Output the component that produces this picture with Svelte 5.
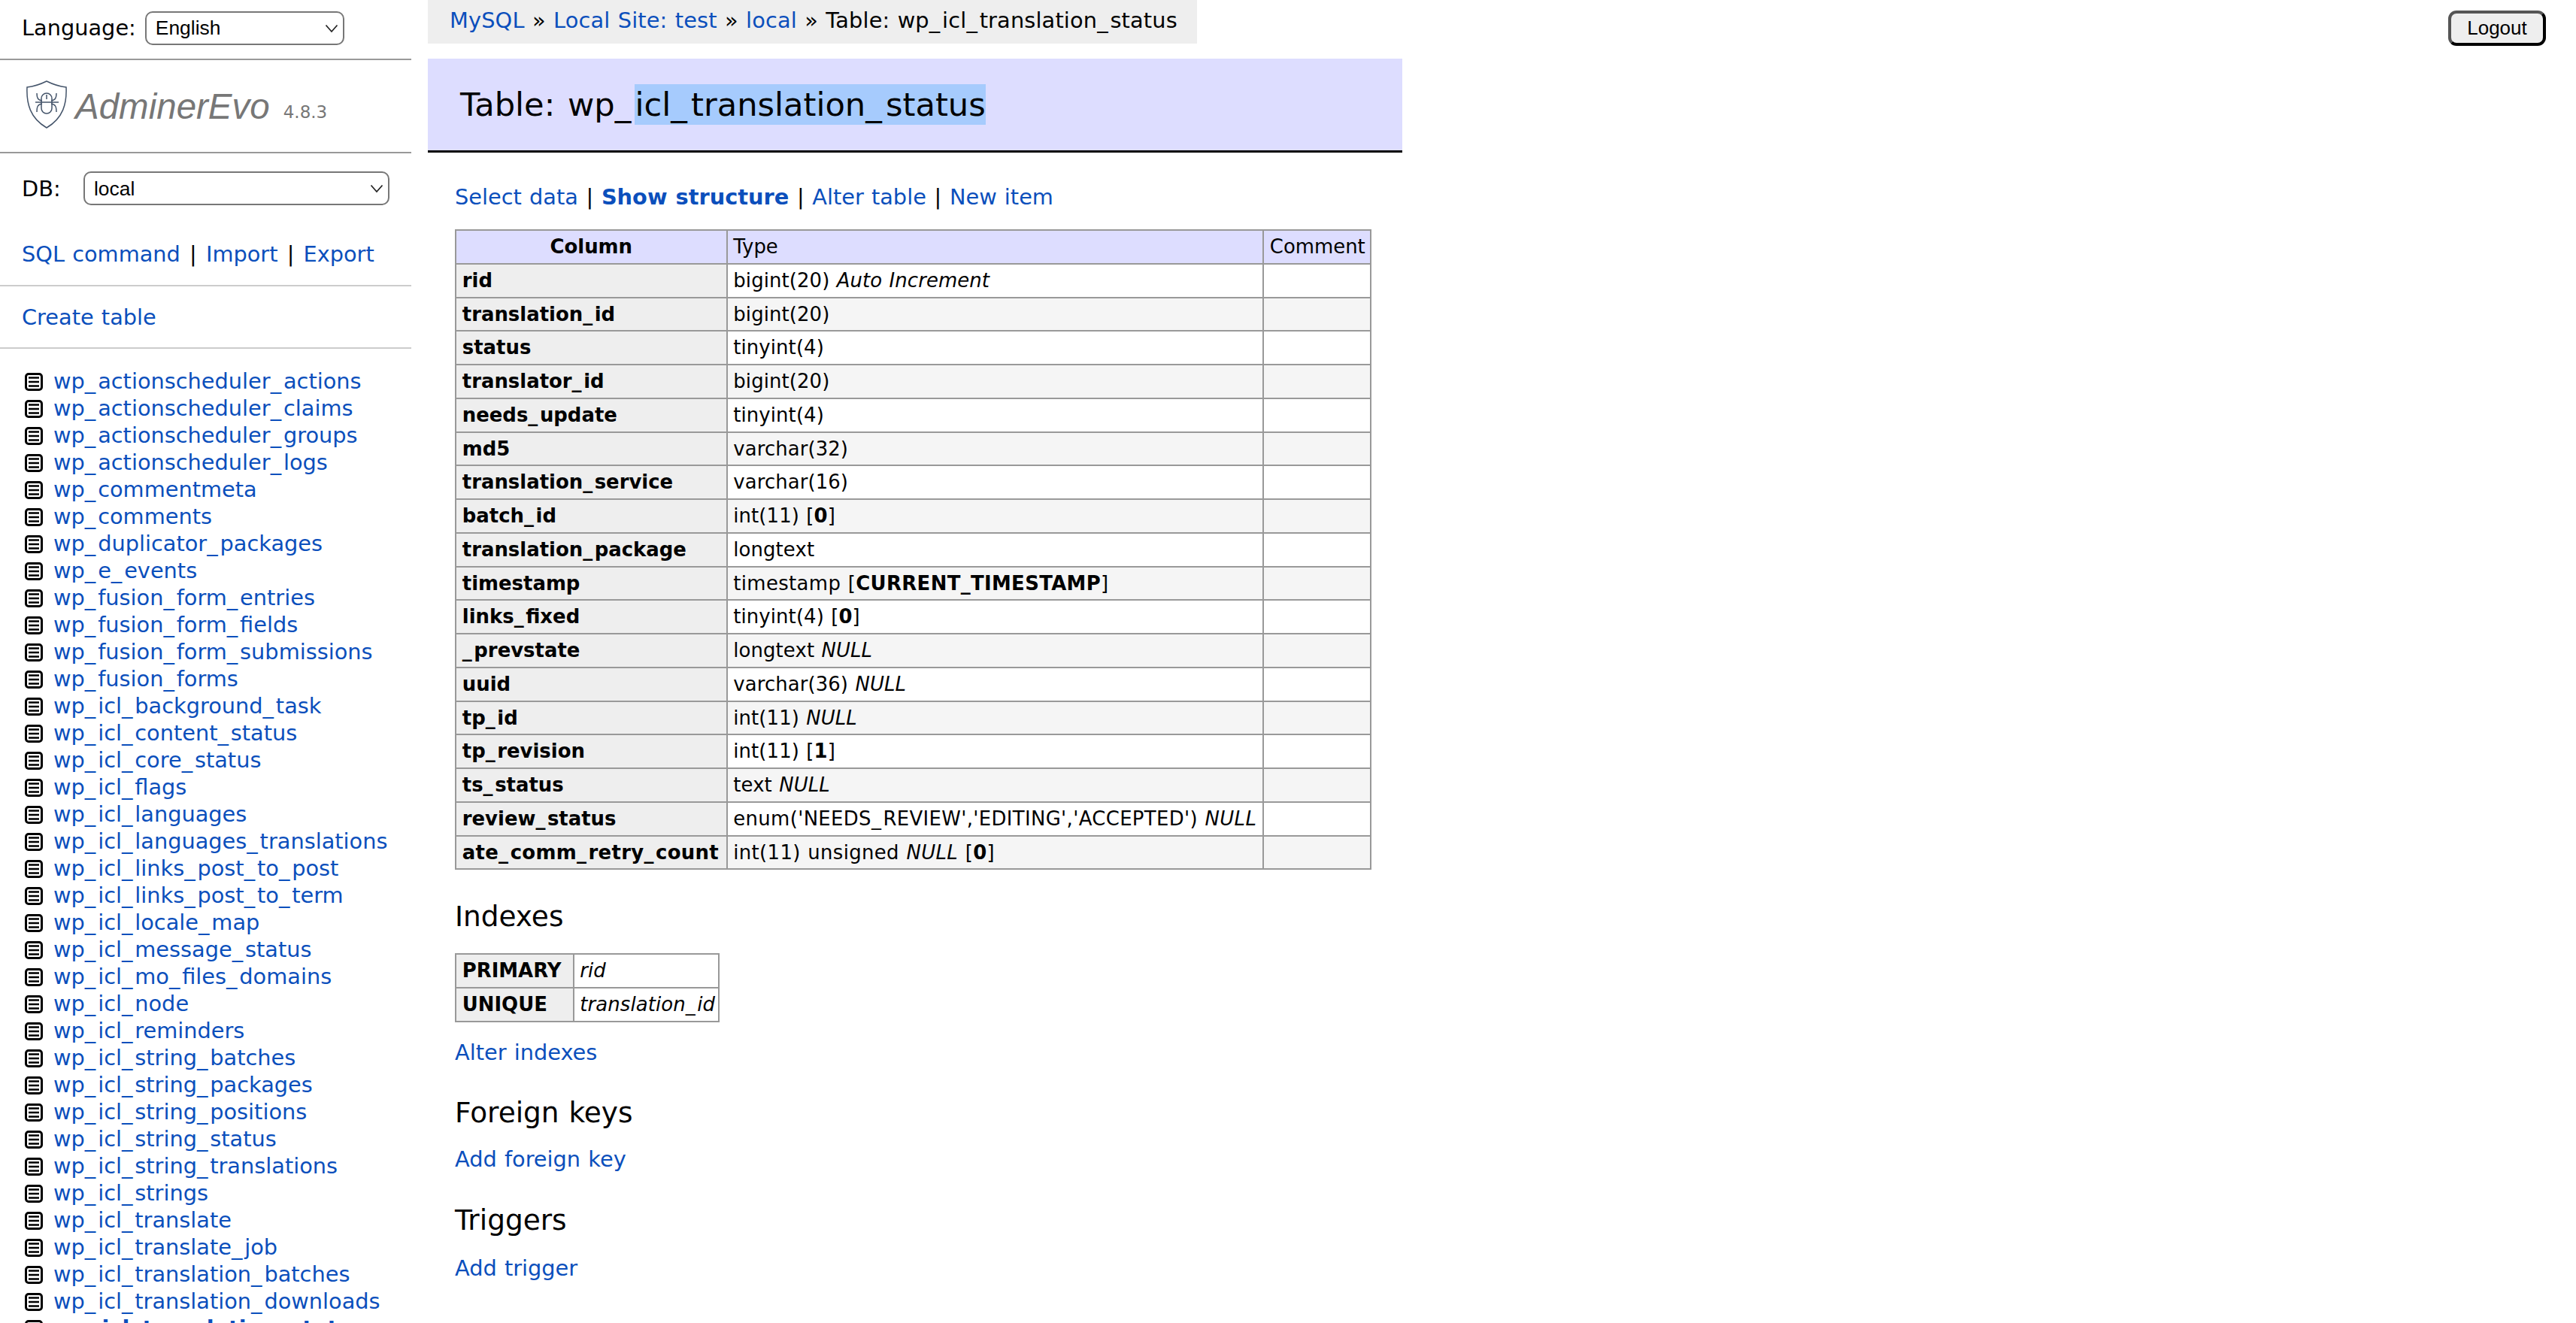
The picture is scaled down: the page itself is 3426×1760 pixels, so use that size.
<script>
  const tables = ['wp_actionscheduler_actions','wp_actionscheduler_claims','wp_actionscheduler_groups','wp_actionscheduler_logs','wp_commentmeta','wp_comments','wp_duplicator_packages','wp_e_events','wp_fusion_form_entries','wp_fusion_form_fields','wp_fusion_form_submissions','wp_fusion_forms','wp_icl_background_task','wp_icl_content_status','wp_icl_core_status','wp_icl_flags','wp_icl_languages','wp_icl_languages_translations','wp_icl_links_post_to_post','wp_icl_links_post_to_term','wp_icl_locale_map','wp_icl_message_status','wp_icl_mo_files_domains','wp_icl_node','wp_icl_reminders','wp_icl_string_batches','wp_icl_string_packages','wp_icl_string_positions','wp_icl_string_status','wp_icl_string_translations','wp_icl_strings','wp_icl_translate','wp_icl_translate_job','wp_icl_translation_batches','wp_icl_translation_downloads','wp_icl_translation_status'];
  const current = 'wp_icl_translation_status';
  const cols = [
    {n:'rid',t:'bigint(20)',i:'Auto Increment'},
    {n:'translation_id',t:'bigint(20)'},
    {n:'status',t:'tinyint(4)'},
    {n:'translator_id',t:'bigint(20)'},
    {n:'needs_update',t:'tinyint(4)'},
    {n:'md5',t:'varchar(32)'},
    {n:'translation_service',t:'varchar(16)'},
    {n:'batch_id',t:'int(11)',d:'0'},
    {n:'translation_package',t:'longtext'},
    {n:'timestamp',t:'timestamp',d:'CURRENT_TIMESTAMP',w:true},
    {n:'links_fixed',t:'tinyint(4)',d:'0'},
    {n:'_prevstate',t:'longtext',i:'NULL'},
    {n:'uuid',t:'varchar(36)',i:'NULL'},
    {n:'tp_id',t:'int(11)',i:'NULL'},
    {n:'tp_revision',t:'int(11)',d:'1'},
    {n:'ts_status',t:'text',i:'NULL'},
    {n:'review_status',t:"enum('NEEDS_REVIEW','EDITING','ACCEPTED')",i:'NULL',w:true},
    {n:'ate_comm_retry_count',t:'int(11) unsigned',i:'NULL',d:'0',w:true,tw:true}
  ];
</script>

{#snippet us(name)}{#each name.split('_') as part, i}{#if i}<span class="u">_</span>{/if}{part}{/each}{/snippet}
{#snippet sep()}<span class="sep">|</span>{/snippet}

<div class="page">
  <aside class="side">
    <div class="lang">
      <span>Language:</span>
      <div class="sel lang-sel">
        <select><option>English</option></select>
        <svg class="chev" viewBox="0 0 18 12" width="18" height="12"><path d="M1.5 1.5 9 10l7.5-8.5" fill="none" stroke="#222" stroke-width="1.700"/></svg>
      </div>
    </div>
    <div class="logo">
      <svg class="shield" viewBox="0 0 54 64" width="54" height="64" fill="none" stroke="#44546a" stroke-width="1.5">
        <path d="M27 1C35 5 44 8 53 9C54 31 49 50 27 63C5 50 0 31 1 9C10 8 19 5 27 1Z"/>
        <rect x="20" y="17" width="14" height="27" rx="7"/>
        <path d="M27 19v6M12 29h31M14 17c0 6 1 9 7 10M40 17c0 6-1 9-7 10M14 42c0-7 1-10 7-11M40 42c0-7-1-10-7-11"/>
      </svg>
      <span class="brand">AdminerEvo</span>
      <span class="ver">4.8.3</span>
    </div>
    <div class="db">
      <span>DB:</span>
      <div class="sel db-sel">
        <select><option>local</option></select>
        <svg class="chev" viewBox="0 0 18 12" width="18" height="12"><path d="M1.5 1.5 9 10l7.5-8.5" fill="none" stroke="#222" stroke-width="1.700"/></svg>
      </div>
    </div>
    <p class="links"><a href="#s">SQL command</a> {@render sep()} <a href="#i">Import</a> {@render sep()} <a href="#e">Export</a></p>
    <p class="create"><a href="#c">Create table</a></p>
    <ul class="tables">
      {#each tables as t}
        <li>
          <svg viewBox="0 0 24 24" width="24" height="24" fill="none" stroke="#000"><rect x="1.5" y="1.5" width="21" height="21" rx="3.5" stroke-width="3"/><path d="M5 6.500h14M5 12h14M5 17.500h14" stroke-width="2.400"/></svg>
          <a href="#t" class:cur={t === current}>{@render us(t)}</a>
        </li>
      {/each}
    </ul>
  </aside>

  <main class="main">
    <div class="top">
      <nav class="crumb"><a href="#m">MySQL</a> » <a href="#l">Local Site: test</a> » <a href="#d">local</a> » Table: {@render us('wp_icl_translation_status')}</nav>
      <button class="logout">Logout</button>
    </div>
    <h1>Table: wp<span class="u">_</span><span class="picked">{@render us('icl_translation_status')}</span></h1>
    <div class="body">
      <p class="tabs"><a href="#a">Select data</a> {@render sep()} <a href="#b" class="cur">Show structure</a> {@render sep()} <a href="#c">Alter table</a> {@render sep()} <a href="#d">New item</a></p>
      <table class="structure">
        <thead><tr><th class="c1 head">Column</th><td class="c2 head">Type</td><td class="c3 head">Comment</td></tr></thead>
        <tbody>
          {#each cols as c, idx}
            <tr class:even={idx % 2 === 1}>
              <th class:wide={c.tw}>{@render us(c.n)}</th>
              <td class:wide={c.w}>{@render us(c.t)}{#if c.i}{' '}<i>{c.i}</i>{/if}{#if c.d}{' '}[<b>{c.d}</b>]{/if}</td>
              <td></td>
            </tr>
          {/each}
        </tbody>
      </table>
      <h3 class="h-idx">Indexes</h3>
      <table class="indexes">
        <tbody>
          <tr><th class="i1">PRIMARY</th><td class="i2"><i>rid</i></td></tr>
          <tr><th class="i1">UNIQUE</th><td class="i2"><i>{@render us('translation_id')}</i></td></tr>
        </tbody>
      </table>
      <p class="after-idx"><a href="#x">Alter indexes</a></p>
      <h3>Foreign keys</h3>
      <p class="act"><a href="#y">Add foreign key</a></p>
      <h3>Triggers</h3>
      <p class="act last"><a href="#z">Add trigger</a></p>
    </div>
  </main>
</div>

<style>
  :global(body) { margin: 0; background: #fff; overflow: hidden; }
  .page {
    display: grid;
    grid-template-columns: 547px 1fr;
    column-gap: 22px;
    height: 1760px;
    overflow: hidden;
    font: 28.8px/36px "DejaVu Sans", Verdana, sans-serif;
    word-spacing: 1px;
    color: #000;
  }
  a { color: #0b4fbc; text-decoration: none; }
  .cur { font-weight: bold; }
  p { margin: 0; }
  .u { letter-spacing: 0.1em; }
  .sep { margin: 0 2px; }

  .side { min-width: 0; }
  .lang {
    height: 80px;
    box-sizing: border-box;
    display: flex;
    align-items: center;
    gap: 12px;
    padding: 0 0 4px 29px;
    border-bottom: 2px solid #999;
  }
  .sel { position: relative; }
  .lang-sel { width: 265px; }
  .db-sel { width: 407px; }
  select {
    appearance: none;
    display: block;
    width: 100%;
    height: 45px;
    box-sizing: border-box;
    border: 2px solid #777;
    border-radius: 10px;
    background: #fff;
    color: #000;
    padding: 0 0 0 12px;
    font: 26.4px "Liberation Sans", Arial, sans-serif;
  }
  .chev { position: absolute; right: 8px; top: 17px; pointer-events: none; }
  .logo {
    height: 124px;
    box-sizing: border-box;
    border-bottom: 2px solid #999;
    display: flex;
    align-items: center;
    padding-left: 35px;
  }
  .shield { flex: none; margin-right: 11px; margin-top: -4px; }
  .brand { font: italic 47.500px/1 "Liberation Sans", Arial, sans-serif; color: #777; word-spacing: 0; margin-top: 2px; }
  .ver { font-size: 23px; color: #777; margin-left: 18px; margin-top: 16px; }
  .db {
    display: flex;
    align-items: center;
    gap: 37px;
    padding: 24px 0 0 29px;
  }
  .db span { width: 45px; flex: none; }
  .links {
    margin-top: 47px;
    padding: 0 0 23px 29px;
    border-bottom: 2px solid #ccc;
  }
  .create {
    padding: 23px 0 22px 29px;
    border-bottom: 2px solid #ccc;
  }
  .tables { list-style: none; margin: 25px 0 0; padding: 0 0 0 33px; }
  .tables li { display: flex; align-items: center; height: 36px; white-space: nowrap; }
  .tables svg { flex: none; margin: 2px 14px 0 0; }

  .main { min-width: 0; }
  .top { display: flex; justify-content: space-between; align-items: flex-start; height: 58px; }
  .crumb {
    height: 58px;
    box-sizing: border-box;
    width: 1023px;
    background: #eee;
    padding: 9px 0 0 29px;
    white-space: nowrap;
    letter-spacing: 0.15px;
  }
  .logout {
    margin: 14px 40px 0 0;
    width: 130px;
    height: 47px;
    box-sizing: border-box;
    border: 4px solid;
    border-color: #555 #000 #000 #555;
    border-radius: 11px;
    background: #eee;
    color: #000;
    padding: 0;
    font: 26px "Liberation Sans", Arial, sans-serif;
  }
  h1 {
    margin: 20px 0 0;
    width: 1296px;
    box-sizing: border-box;
    padding: 34px 0 34px 43px;
    background: #ddf;
    border-bottom: 3px solid #000;
    font-size: 43.2px;
    line-height: 54px;
    font-weight: normal;
    word-spacing: 3px;
  }
  h1 .u { letter-spacing: 0.12em; }
  .picked { display: inline-block; background: #a6cbfd; }
  .body { padding-left: 36px; }
  .tabs { margin-top: 41px; }
  .tabs .sep { margin: 0 0.5px; }

  table {
    border-collapse: collapse;
    font-size: 25.92px;
    line-height: 32.4px;
    table-layout: fixed;
  }
  th, td {
    border: 2px solid #999;
    padding: 5.18px 7.78px;
    white-space: nowrap;
    text-align: left;
  }
  td { letter-spacing: 0.1px; }
  th { background: #eee; font-weight: bold; }
  td.wide { letter-spacing: 0.35px; }
  th.wide { letter-spacing: 0.3px; }
  .even td { background: #f5f5f5; }
  .structure { width: 1219px; margin-top: 25px; }
  .c1 { width: 343px; text-align: center; }
  .c2 { width: 696px; }
  .head { background: #ddf; letter-spacing: 0; }
  .indexes { width: 352px; }
  .i1 { width: 139px; }

  h3 {
    margin: 39.500px 0 0;
    font-size: 37.44px;
    line-height: 46.8px;
    font-weight: normal;
  }
  .h-idx { margin-top: 39px; margin-bottom: 25px; }
  .after-idx { margin-top: 22px; }
  .act { margin-top: 20.500px; }
  .last { margin-top: 22px; }
</style>
